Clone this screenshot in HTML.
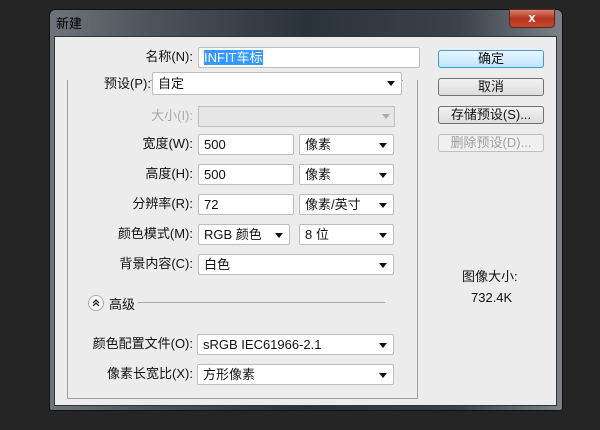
<!DOCTYPE html>
<html><head><meta charset="utf-8"><style>
*{margin:0;padding:0;box-sizing:border-box}
body{width:600px;height:430px;background:#252525;position:relative;overflow:hidden;font-family:"Liberation Sans","Noto Sans CJK SC",sans-serif;font-size:13px;color:#111}
.a{position:absolute}
.win{left:49px;top:9px;width:514px;height:402px;border-radius:6px 6px 3px 3px;background:linear-gradient(90deg,#6f747a 0%,#4d535b 20%,#2a323c 50%,#3b424b 80%,#7d8186 100%);border:1px solid #111}
.client{left:54px;top:36px;width:503px;height:370px;background:#ececec;border:1px solid #333}
.lbl{text-align:right;width:160px;line-height:20px}
.in{background:#fff;border:1px solid #bdbdbd;height:21px;line-height:19px;padding-left:5px;border-radius:2px}
.sel{background:#fff;border:1px solid #bdbdbd;height:21px;line-height:19px;padding-left:5px;border-radius:2px}
.sel:after{content:"";position:absolute;right:6px;top:8px;border-left:4px solid transparent;border-right:4px solid transparent;border-top:5px solid #111}
.btn{left:438px;width:106px;height:18px;border:1px solid #707070;border-radius:3px;background:linear-gradient(#f2f2f2,#dcdcdc);text-align:center;line-height:16px}
</style></head><body>
<div class="a win"></div>
<div class="a" style="left:56px;top:13px;color:#000;font-size:13px">新建</div>
<div class="a" style="left:509px;top:9px;width:46px;height:19px;border-radius:0 0 4px 4px;background:linear-gradient(#d9826e,#b8341e 50%,#c6472c);border:1px solid #5a2a20;color:#fff;text-align:center;font-weight:bold;line-height:16px">x</div>
<div class="a client"></div>
<div class="a" style="left:67px;top:80px;width:351px;height:319px;border:1px solid #a0a0a0"></div>
<div class="a" style="left:68px;top:70px;width:82px;height:18px;background:#ececec"></div>
<div class="a" style="left:403px;top:70px;width:14px;height:18px;background:#ececec"></div>
<div class="a lbl" style="left:33px;top:47px">名称(N):</div>
<div class="a in" style="left:198px;top:47px;width:222px;"><span style="background:#3399ff;color:#fff">INFIT车标</span></div>
<div class="a lbl" style="left:-9px;top:74px">预设(P):</div>
<div class="a sel" style="left:152px;top:72px;width:250px;height:23px;line-height:21px">自定</div>
<div class="a lbl" style="left:33px;top:106px;color:#a8a8a8">大小(I):</div>
<div class="a" style="left:198px;top:106px;width:197px;height:21px;border:1px solid #c0c0c0;background:#e6e6e6"></div>
<div class="a" style="left:382px;top:114px;border-left:4px solid transparent;border-right:4px solid transparent;border-top:5px solid #aaa"></div>
<div class="a lbl" style="left:33px;top:134px">宽度(W):</div>
<div class="a in" style="left:198px;top:134px;width:96px">500</div>
<div class="a sel" style="left:299px;top:134px;width:95px">像素</div>
<div class="a lbl" style="left:33px;top:164px">高度(H):</div>
<div class="a in" style="left:198px;top:164px;width:96px">500</div>
<div class="a sel" style="left:299px;top:164px;width:95px">像素</div>
<div class="a lbl" style="left:33px;top:194px">分辨率(R):</div>
<div class="a in" style="left:198px;top:194px;width:96px">72</div>
<div class="a sel" style="left:299px;top:194px;width:95px">像素/英寸</div>
<div class="a lbl" style="left:33px;top:224px">颜色模式(M):</div>
<div class="a sel" style="left:198px;top:224px;width:92px">RGB 颜色</div>
<div class="a sel" style="left:299px;top:224px;width:95px">8 位</div>
<div class="a lbl" style="left:33px;top:254px">背景内容(C):</div>
<div class="a sel" style="left:198px;top:254px;width:196px">白色</div>
<svg class="a" style="left:88px;top:295px" width="16" height="16" viewBox="0 0 16 16"><circle cx="8" cy="8" r="7.5" fill="#fafafa" stroke="#aaa"/><path d="M5 8l3-3 3 3M5 11l3-3 3 3" fill="none" stroke="#222" stroke-width="1.3"/></svg>
<div class="a" style="left:109px;top:294px">高级</div>
<div class="a" style="left:138px;top:302px;width:247px;height:1px;background:#a8a8a8"></div>
<div class="a lbl" style="left:33px;top:334px">颜色配置文件(O):</div>
<div class="a sel" style="left:197px;top:334px;width:197px">sRGB IEC61966-2.1</div>
<div class="a lbl" style="left:33px;top:364px">像素长宽比(X):</div>
<div class="a sel" style="left:197px;top:364px;width:197px">方形像素</div>
<div class="a btn" style="top:50px;border-color:#3c9ad8;background:linear-gradient(#eaf6fd,#bee6fd)">确定</div>
<div class="a btn" style="top:78px">取消</div>
<div class="a btn" style="top:106px">存储预设(S)...</div>
<div class="a btn" style="top:134px;color:#a0a0a0;border-color:#c0c0c0;background:#f0f0f0">删除预设(D)...</div>
<div class="a" style="left:462px;top:266px">图像大小:</div>
<div class="a" style="left:471px;top:290px">732.4K</div>
</body></html>
